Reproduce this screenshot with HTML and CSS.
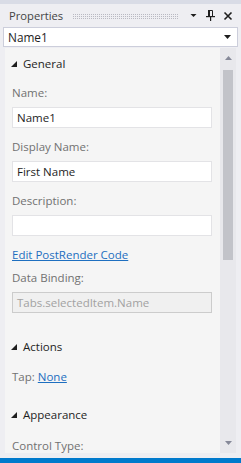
FILE: index.html
```html
<!DOCTYPE html>
<html>
<head>
<meta charset="utf-8">
<link rel="stylesheet" href="styles.css">
</head>
<body>
<div class="window">
  <div class="top-strip"></div>
  <div class="titlebar">
    <span class="title">Properties</span>
    <span class="grip"></span>
    <svg class="tb-icon" width="9" height="9" viewBox="0 0 9 9"><polygon points="1.5,3 7.5,3 4.5,6" fill="#1e1e1e"/></svg>
    <svg class="tb-icon" width="9" height="11" viewBox="0 0 9 11"><path d="M2.5 0.5 H6.5 V6.5 H2.5 Z" fill="none" stroke="#1e1e1e"/><rect x="2" y="0" width="2" height="7" fill="#1e1e1e"/><rect x="0" y="6" width="9" height="1.2" fill="#1e1e1e"/><rect x="4" y="7" width="1.2" height="4" fill="#1e1e1e"/></svg>
    <svg class="tb-icon" width="10" height="10" viewBox="0 0 10 10"><path d="M1.5 1.5 L8.5 8.5 M8.5 1.5 L1.5 8.5" stroke="#1e1e1e" stroke-width="1.6"/></svg>
  </div>
  <div class="combo">
    <span class="combo-text">Name1</span>
    <svg width="9" height="6" viewBox="0 0 9 6"><polygon points="1,1 8,1 4.5,5" fill="#1e1e1e"/></svg>
  </div>
  <div class="panel">
    <div class="content">
      <div class="section-head"><svg width="6" height="6" viewBox="0 0 6 6"><polygon points="6,0 6,6 0,6" fill="#1e1e1e"/></svg>General</div>
      <div class="label first">Name:</div>
      <div class="field">Name1</div>
      <div class="label">Display Name:</div>
      <div class="field">First Name</div>
      <div class="label">Description:</div>
      <div class="field"></div>
      <a class="link">Edit PostRender Code</a>
      <div class="label binding">Data Binding:</div>
      <div class="field disabled">Tabs.selectedItem.Name</div>
      <div class="section-head actions"><svg width="6" height="6" viewBox="0 0 6 6"><polygon points="6,0 6,6 0,6" fill="#1e1e1e"/></svg>Actions</div>
      <div class="tap"><span class="label-inline">Tap:</span> <a class="link inline">None</a></div>
      <div class="section-head appearance"><svg width="6" height="6" viewBox="0 0 6 6"><polygon points="6,0 6,6 0,6" fill="#1e1e1e"/></svg>Appearance</div>
      <div class="label control">Control Type:</div>
    </div>
    <div class="scrollbar">
      <div class="sb-btn"><svg width="7" height="4" viewBox="0 0 7 4"><polygon points="0,4 7,4 3.5,0" fill="#868999"/></svg></div>
      <div class="sb-track"><div class="sb-thumb"></div></div>
      <div class="sb-btn"><svg width="7" height="4" viewBox="0 0 7 4"><polygon points="0,0 7,0 3.5,4" fill="#868999"/></svg></div>
    </div>
  </div>
  <div class="bottom-gap"></div>
  <div class="statusbar"></div>
</div>
</body>
</html>
```

FILE: styles.css
```css
html, body {
  margin: 0;
  padding: 0;
}
body {
  background: #eeeef2;
  font-family: "Open Sans", "Noto Sans", sans-serif;
  font-size: 11.5px;
  color: #1e1e1e;
}
.window {
  width: 241px;
  height: 463px;
  display: flex;
  flex-direction: column;
  overflow: hidden;
}
.top-strip {
  height: 4px;
  background: #d9dce6;
}
.titlebar {
  height: 23px;
  display: flex;
  align-items: center;
  padding: 0 8px 0 9px;
  gap: 8px;
}
.title {
  color: #444444;
  font-size: 11.2px;
  line-height: 16px;
}
.grip {
  flex: 1;
  height: 6px;
  margin: 0 3px 0 1px;
  background-image: conic-gradient(from 90deg, #b9b9c2 25%, transparent 0);
  background-size: 2px 2px;
}
.tb-icon {
  display: block;
}
.combo {
  height: 18px;
  margin: 0 3px;
  background: #ffffff;
  border: 1px solid #cccedb;
  display: flex;
  align-items: center;
  justify-content: space-between;
  padding: 0 5px 0 4px;
}
.combo-text {
  font-size: 11.8px;
  line-height: 16px;
}
.panel {
  height: 405px;
  margin: 1px 5px 0 5px;
  display: flex;
  background: #f5f5f5;
}
.content {
  flex: 1;
  padding: 8px 0 0 7px;
  overflow: hidden;
}
.section-head {
  height: 16px;
  line-height: 16px;
  display: flex;
  align-items: center;
  margin-left: -1px;
  color: #1e1e1e;
}
.section-head svg {
  margin-right: 6px;
}
.label {
  height: 16px;
  line-height: 16px;
  color: #717171;
  margin-bottom: 6px;
}
.label.first {
  margin-top: 13px;
}
.field {
  width: 190px;
  height: 19px;
  line-height: 19px;
  border: 1px solid #e3e3e6;
  background: #ffffff;
  padding: 0 4px;
  margin-bottom: 11px;
  white-space: nowrap;
  overflow: hidden;
}
.field.disabled {
  background: #f0f0f0;
  border-color: #cccccc;
  color: #a2a2a2;
  margin-bottom: 0;
}
.link {
  display: block;
  height: 16px;
  line-height: 16px;
  color: #1e6fc0;
  text-decoration: underline;
}
.link.inline {
  display: inline;
}
.label.binding {
  margin-top: 7px;
}
.section-head.actions {
  margin-top: 26px;
}
.tap {
  margin-top: 14px;
  height: 16px;
  line-height: 16px;
  color: #717171;
}
.section-head.appearance {
  margin-top: 22px;
}
.label.control {
  margin-top: 15px;
}
.scrollbar {
  width: 16px;
  background: #e8e8ec;
  display: flex;
  flex-direction: column;
}
.sb-btn {
  height: 20px;
  display: flex;
  align-items: center;
  justify-content: center;
}
.sb-track {
  flex: 1;
  padding: 2px 3px 0 3px;
}
.sb-thumb {
  height: 190px;
  background: #c2c3c9;
}
.bottom-gap {
  flex: 1;
}
.statusbar {
  height: 5px;
  background: #007acc;
}
```
